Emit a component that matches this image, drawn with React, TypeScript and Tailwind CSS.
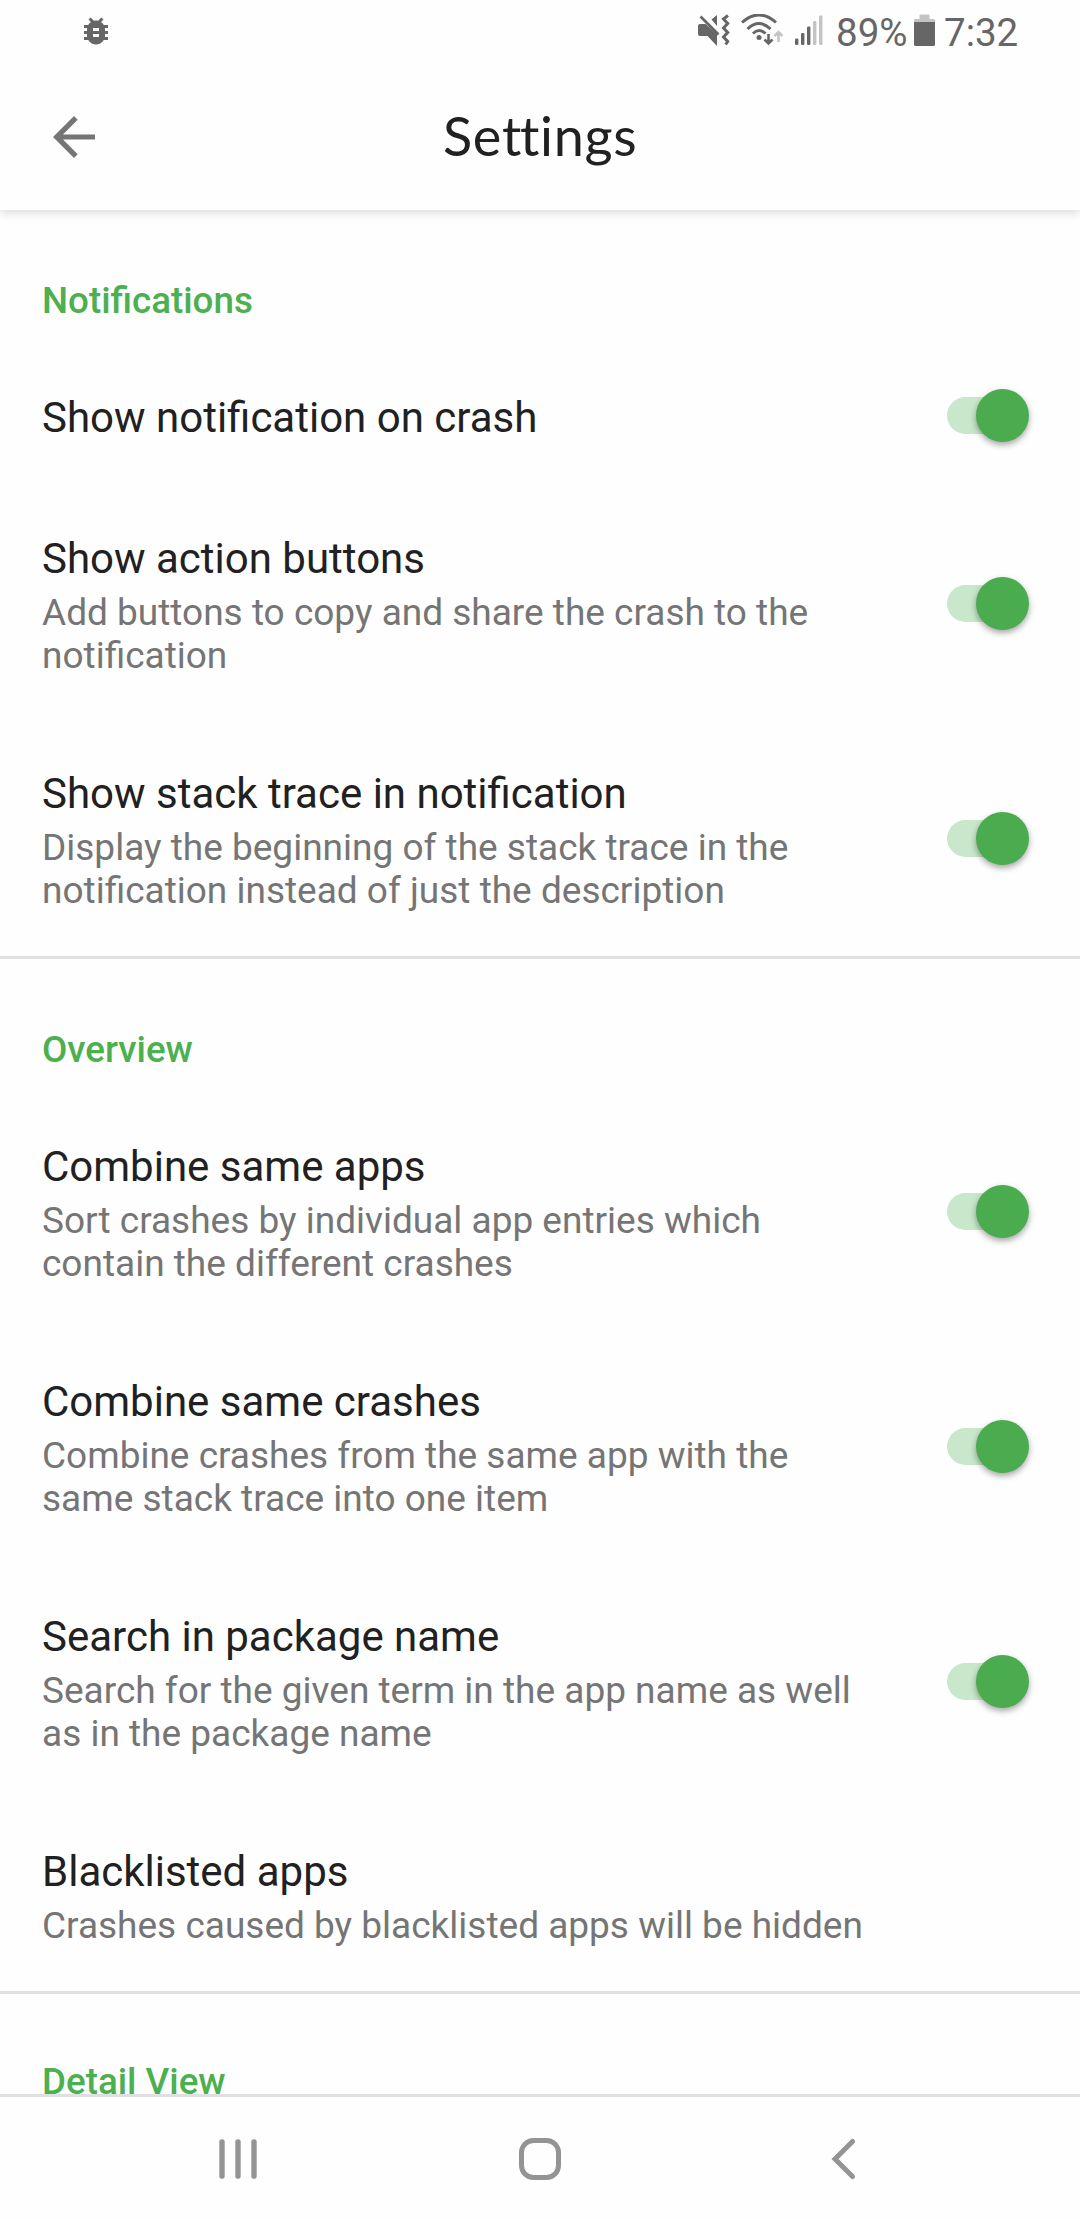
function MuteVibrateIcon() {
  return (
    <svg className="h-8 w-[33px]" viewBox="0 0 33 32" fill="#666">
      <path d="M1 12q0-2 2-2h5.500L20 20v12L10.500 22H3q-2 0-2-2z" />
      <path d="M14.500 5.500 20 1v11z" />
      <path d="M3.500 2.500 21.500 20.500" stroke="#666" strokeWidth="2.600" />
      <path d="M31 1.500 26.500 5l4.200 4.500-4.200 4.500 4.200 4.500-4.200 4.500 4.200 4.500-2 3" fill="none" stroke="#666" strokeWidth="3" />
    </svg>
  );
}

function WifiIcon() {
  return (
    <svg className="h-8 w-[42px]" viewBox="0 0 42 32" fill="none" stroke="#666" strokeWidth="3">
      <path d="M1 8.500Q18 -6.500 35 8.500" />
      <path d="M6.500 15Q18 4 29.500 15" />
      <path d="M12 19.500Q18 13.500 24.500 19.500" />
      <circle cx="18" cy="23.500" r="2.500" fill="#666" stroke="none" />
      <path d="M27.500 20v9M23.500 25.500l4 4 4-4" strokeWidth="2.600" />
      <path d="M37.500 28v-9M33.500 22l4-4 4 4" stroke="#c4c4c4" strokeWidth="2.600" />
    </svg>
  );
}

function SignalIcon() {
  return (
    <svg className="h-8 w-7" viewBox="0 0 28 32" fill="#666">
      <rect x="0" y="24.500" width="3.400" height="6.500" rx="1.200" />
      <rect x="6" y="19" width="3.400" height="12" rx="1.200" />
      <rect x="12" y="12.500" width="3.400" height="18.500" rx="1.200" />
      <rect x="18" y="7" width="3.400" height="24" rx="1.200" fill="#c4c4c4" />
      <rect x="24" y="1.500" width="3.400" height="29.500" rx="1.200" fill="#c4c4c4" />
    </svg>
  );
}

function BugIcon() {
  return (
    <svg className="h-[36px] w-[36px]" viewBox="0 0 24 24" fill="#666">
      <path d="M20 8h-2.810c-.450-.780-1.070-1.450-1.820-1.960L17 4.410 15.590 3l-2.170 2.170C12.960 5.060 12.490 5 12 5c-.490 0-.960.060-1.410.170L8.410 3 7 4.410l1.620 1.630C7.880 6.550 7.260 7.220 6.810 8H4v2h2.090c-.050.330-.090.660-.090 1v1H4v2h2v1c0 .340.040.670.090 1H4v2h2.810c1.040 1.790 2.970 3 5.190 3s4.150-1.210 5.190-3H20v-2h-2.090c.050-.330.090-.660.090-1v-1h2v-2h-2v-1c0-.340-.040-.670-.090-1H20V8zm-6 8h-4v-2h4v2zm0-4h-4v-2h4v2z" />
    </svg>
  );
}

function StatusBar() {
  return (
    <div className="relative z-20 flex h-[63px] shrink-0 items-start bg-[#fefefe] text-[38.500px] leading-[45px] text-[#666]">
      <div className="ml-[78px] mt-[13px]"><BugIcon /></div>
      <div className="ml-[583px] mt-[14px]"><MuteVibrateIcon /></div>
      <div className="ml-[11px] mt-[14px]"><WifiIcon /></div>
      <div className="ml-[12px] mt-[14px]"><SignalIcon /></div>
      <span className="ml-[13px] mt-[10px] w-[77px] whitespace-nowrap">89%</span>
      <svg className="ml-px mt-[14px] h-8 w-[21px]" viewBox="0 0 21 32">
        <path d="M0 6q0-1 1-1h4.500V1.500q0-1 1-1h8q1 0 1 1V5H20q1 0 1 1v3H0z" fill="#c4c4c4" />
        <path d="M0 8h21v22.500q0 1.500-1.500 1.500h-18Q0 32 0 30.500z" fill="#666" />
      </svg>
      <span className="ml-[9px] mt-[10px] whitespace-nowrap">7:32</span>
    </div>
  );
}

function Toggle() {
  return (
    <div className="-mb-[6px] -mt-[10px] mr-[51px] flex h-[53px] w-[82px] shrink-0 items-center justify-end rounded-full">
      <div className="-mr-[45px] h-[37px] w-[75px] rounded-full bg-[#c9e7cb]" />
      <div className="relative size-[53px] shrink-0 rounded-full bg-[#4bab4f] shadow-[0_3px_6px_rgba(0,0,0,0.35)]" />
    </div>
  );
}

function SectionTitle({ children }: { children: string }) {
  return (
    <h2 className="h-[135px] pl-[42px] pt-[69px] text-[36.750px] font-medium leading-[43px] text-[#4caf50]">{children}</h2>
  );
}

type RowProps = { title: string; lines?: string[]; toggle?: boolean };

function Row({ title, lines = [], toggle = true }: RowProps) {
  return (
    <div className="flex items-center justify-between pb-[44px] pl-[42px] pt-[48px]">
      <div className="whitespace-nowrap">
        <div className="text-[42px] leading-[49px] text-[#212121]">{title}</div>
        {lines.length > 0 && (
          <div className="mt-2 text-[37px] leading-[43px] text-[#757575]">
            {lines.map((line) => (
              <div key={line}>{line}</div>
            ))}
          </div>
        )}
      </div>
      {toggle && <Toggle />}
    </div>
  );
}

function Divider() {
  return <div className="h-[3px] shrink-0 bg-[#e0e0e0]" />;
}

export default function App() {
  return (
    <div className="flex h-[2220px] w-[1080px] flex-col overflow-hidden bg-[#fefefe] font-['Roboto',sans-serif]">
      <StatusBar />
      <header className="relative z-10 flex h-[147px] shrink-0 items-center bg-[#fefefe] shadow-[0_2px_10px_rgba(0,0,0,0.17)]">
        <svg className="ml-[53px] h-[42px] w-[42px]" viewBox="0 0 42 42" fill="#757575">
          <path d="M42 18.400H10L24.700 3.700 21 0 0 21l21 21 3.700-3.700L10 23.600h32z" />
        </svg>
        <h1 className="-mt-0.5 ml-[348px] font-['Lato',sans-serif] text-[54px] leading-[62px] tracking-[0.700px] text-[#212121]">
          Se<span className="tracking-[-1.500px]">t</span>tings
        </h1>
      </header>

      <main className="h-[1884px] shrink-0 overflow-hidden">
        <SectionTitle>Notifications</SectionTitle>
        <Row title="Show notification on crash" />
        <Row title="Show action buttons" lines={["Add buttons to copy and share the crash to the", "notification"]} />
        <Row
          title="Show stack trace in notification"
          lines={["Display the beginning of the stack trace in the", "notification instead of just the description"]}
        />
        <Divider />
        <SectionTitle>Overview</SectionTitle>
        <Row title="Combine same apps" lines={["Sort crashes by individual app entries which", "contain the different crashes"]} />
        <Row title="Combine same crashes" lines={["Combine crashes from the same app with the", "same stack trace into one item"]} />
        <Row
          title="Search in package name"
          lines={["Search for the given term in the app name as well", "as in the package name"]}
        />
        <Row title="Blacklisted apps" lines={["Crashes caused by blacklisted apps will be hidden"]} toggle={false} />
        <Divider />
        <div className="-mt-[3px]">
          <SectionTitle>Detail View</SectionTitle>
        </div>
      </main>

      <Divider />
      <nav className="flex flex-1 items-start pt-[41px]">
        <svg className="ml-[219px] h-[42px] w-[38px]" viewBox="0 0 38 42" fill="#949494">
          <rect x="0.300" y="1.300" width="5.400" height="39.500" rx="2.500" />
          <rect x="16.300" y="1.300" width="5.400" height="39.500" rx="2.500" />
          <rect x="32.300" y="1.300" width="5.400" height="39.500" rx="2.500" />
        </svg>
        <svg className="ml-[262px] h-[42px] w-[42px]" viewBox="0 0 42 42" fill="none" stroke="#949494" strokeWidth="5">
          <rect x="2.500" y="2.500" width="37" height="37" rx="12" />
        </svg>
        <svg className="ml-[270px] h-[42px] w-[26px]" viewBox="0 0 26 42" fill="none" stroke="#949494" strokeWidth="5" strokeLinecap="round">
          <path d="M21.500 3.500 4 21l17.500 17.500" />
        </svg>
      </nav>
    </div>
  );
}
